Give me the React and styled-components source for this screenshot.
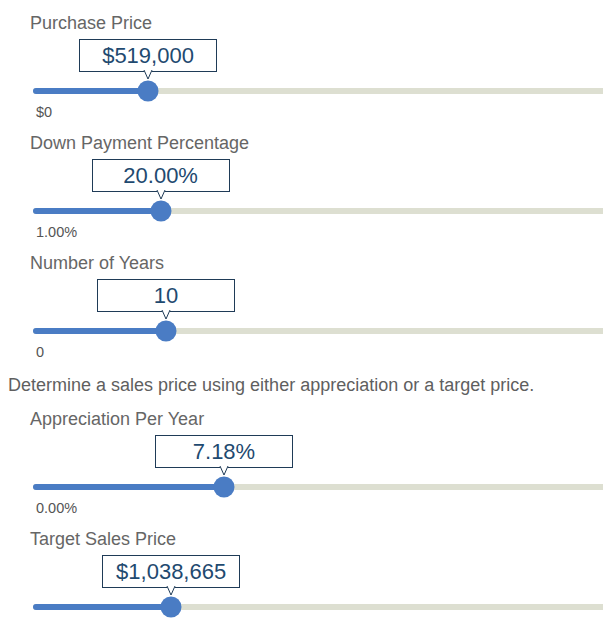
import React from "react";
import styled, { createGlobalStyle } from "styled-components";

const TRACK_WIDTH = 665;

const GlobalStyle = createGlobalStyle`
  html, body {
    margin: 0;
    padding: 0;
    overflow: hidden;
    background: #fff;
  }
  body {
    font-family: "Liberation Sans", Arial, sans-serif;
  }
`;

const Page = styled.div`
  display: flex;
  flex-direction: column;
  height: 620px;
  overflow: hidden;
  padding: 12px 0 0 8px;
  box-sizing: border-box;
`;

const Field = styled.div`
  padding-left: 22px;
  margin-bottom: 11px;
`;

const Label = styled.div`
  font-size: 18px;
  line-height: 22px;
  color: #666;
`;

const Note = styled.div`
  font-size: 18px;
  line-height: 22px;
  color: #5f5f5f;
  margin: 1.5px 0 12.5px;
`;

const Bubble = styled.div`
  position: relative;
  box-sizing: border-box;
  width: 138px;
  height: 33px;
  margin-top: 5px;
  border: 1px solid #1f3b57;
  background: #fff;
  font-size: 22px;
  line-height: 31px;
  text-align: center;
  color: #1f4a70;
`;

const Caret = styled.svg`
  position: absolute;
  left: 50%;
  top: calc(100% - 1px);
  transform: translateX(-50%);
  overflow: visible;
`;

const Track = styled.div`
  position: relative;
  width: ${TRACK_WIDTH}px;
  height: 6px;
  margin: 16px 0 0 3px;
  border-radius: 3px;
  background: #dddfd1;
`;

const Fill = styled.div`
  position: absolute;
  left: 0;
  top: 0;
  bottom: 0;
  border-radius: 3px 0 0 3px;
  background: #4a7cc4;
`;

const Thumb = styled.div`
  position: absolute;
  top: 50%;
  width: 21px;
  height: 21px;
  border-radius: 50%;
  background: #4a7cc4;
  transform: translate(-50%, -50%);
`;

const MinLabel = styled.div`
  margin: 9px 0 0 6px;
  font-size: 14.5px;
  line-height: 18px;
  color: #555;
`;

const Slider = ({ label, min, max, value, display, minText }) => {
  const x = ((value - min) / (max - min)) * TRACK_WIDTH;
  return (
    <Field>
      <Label>{label}</Label>
      <Bubble style={{ marginLeft: 3 + x - 69 }}>
        {display}
        <Caret width="9" height="10" viewBox="0 0 9 10">
          <polygon points="0,0 4.5,9.5 9,0" fill="#fff" />
          <polyline
            points="0.5,0 4.5,9 8.5,0"
            fill="none"
            stroke="#1f3b57"
            strokeWidth="1"
          />
        </Caret>
      </Bubble>
      <Track>
        <Fill style={{ width: x }} />
        <Thumb style={{ left: x }} />
      </Track>
      {minText && <MinLabel>{minText}</MinLabel>}
    </Field>
  );
};

const App = () => {
  return (
    <>
      <GlobalStyle />
      <Page>
        <Slider
          label="Purchase Price"
          min={0}
          max={3000000}
          value={519000}
          display="$519,000"
          minText="$0"
        />
        <Slider
          label="Down Payment Percentage"
          min={1}
          max={100}
          value={20}
          display="20.00%"
          minText="1.00%"
        />
        <Slider
          label="Number of Years"
          min={0}
          max={50}
          value={10}
          display="10"
          minText="0"
        />
        <Note>Determine a sales price using either appreciation or a target price.</Note>
        <Slider
          label="Appreciation Per Year"
          min={0}
          max={25}
          value={7.18}
          display="7.18%"
          minText="0.00%"
        />
        <Slider
          label="Target Sales Price"
          min={0}
          max={5000000}
          value={1038665}
          display="$1,038,665"
        />
      </Page>
    </>
  );
};

export default App;
